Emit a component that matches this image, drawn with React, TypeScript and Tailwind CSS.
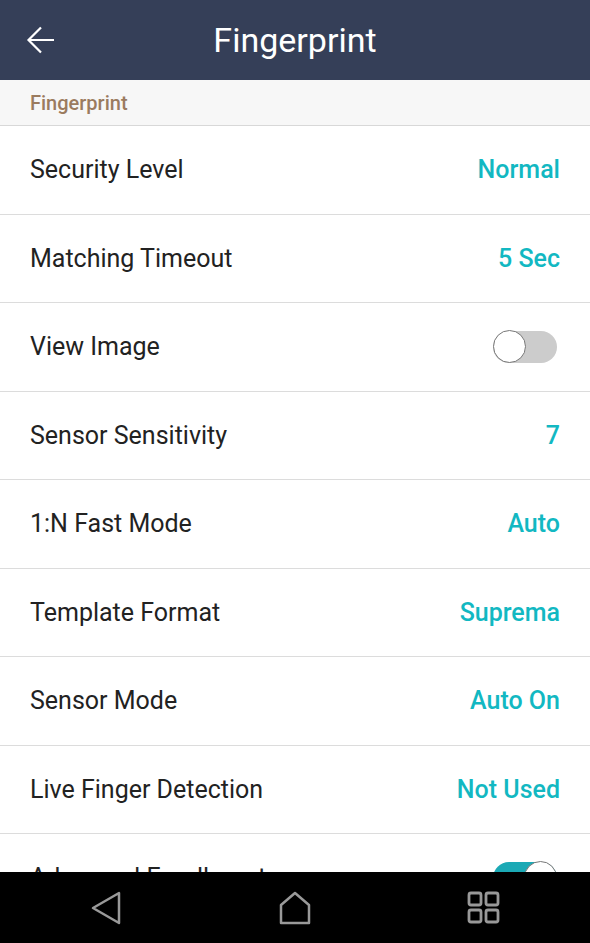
const rows: { label: string; value?: string; toggle?: 'on' | 'off' }[] = [
  { label: 'Security Level', value: 'Normal' },
  { label: 'Matching Timeout', value: '5 Sec' },
  { label: 'View Image', toggle: 'off' },
  { label: 'Sensor Sensitivity', value: '7' },
  { label: '1:N Fast Mode', value: 'Auto' },
  { label: 'Template Format', value: 'Suprema' },
  { label: 'Sensor Mode', value: 'Auto On' },
  { label: 'Live Finger Detection', value: 'Not Used' },
  { label: 'Advanced Enrollment', toggle: 'on' },
];

function Toggle({ on }: { on: boolean }) {
  return (
    <div className={`mr-[3px] flex h-8 w-16 items-center rounded-full ${on ? 'justify-end bg-[#1ba9b5]' : 'bg-[#cccccc]'}`}>
      <div className="size-[33px] shrink-0 rounded-full border border-[#777] bg-white" />
    </div>
  );
}

export default function App() {
  return (
    <div className="flex h-[943px] w-[590px] flex-col overflow-hidden bg-white font-['Roboto',sans-serif]">
      <header className="grid h-20 shrink-0 grid-cols-[80px_1fr_80px] items-center bg-[#353f58] text-white">
        <svg className="ml-[26px]" width="30" height="28" viewBox="0 0 30 28" fill="none" stroke="white" strokeWidth="2.2">
          <path d="M28 14H3M15 1.5L2.5 14L15 26.5" />
        </svg>
        <h1 className="text-center text-[34px] font-normal leading-10">Fingerprint</h1>
      </header>
      <div className="flex h-[46px] shrink-0 items-center border-b border-[#d8d8d8] bg-[#f7f7f7] pl-[30px] text-[20px] font-medium text-[#9b7b5f]">
        Fingerprint
      </div>
      <main className="min-h-0 flex-1 overflow-hidden">
        {rows.map((row) => (
          <div key={row.label} className="flex h-[88.5px] items-center justify-between border-b border-[#dcdcdc] px-[30px]">
            <span className="text-[25px] text-[#222]">{row.label}</span>
            {row.toggle ? <Toggle on={row.toggle === 'on'} /> : <span className="text-[25px] font-medium text-[#12b8c2]">{row.value}</span>}
          </div>
        ))}
      </main>
      <nav className="grid h-[71px] shrink-0 grid-cols-[212px_166px_212px] items-center bg-black">
        <svg className="ml-[90px]" width="32" height="34" viewBox="0 0 32 34" fill="none" stroke="#999" strokeWidth="2.5" strokeLinejoin="round">
          <path d="M29 2V32L3 17Z" />
        </svg>
        <svg className="mx-auto" width="32" height="34" viewBox="0 0 32 34" fill="none" stroke="#999" strokeWidth="2.5" strokeLinejoin="round">
          <path d="M2 14L16 2L30 14V32H2Z" />
        </svg>
        <svg className="ml-[89px]" width="34" height="34" viewBox="0 0 34 34" fill="none" stroke="#999" strokeWidth="2.8">
          <rect x="2" y="2" width="12" height="12" rx="2" /><rect x="19" y="2" width="12" height="12" rx="2" />
          <rect x="2" y="19" width="12" height="12" rx="2" /><rect x="19" y="19" width="12" height="12" rx="2" />
        </svg>
      </nav>
    </div>
  );
}
